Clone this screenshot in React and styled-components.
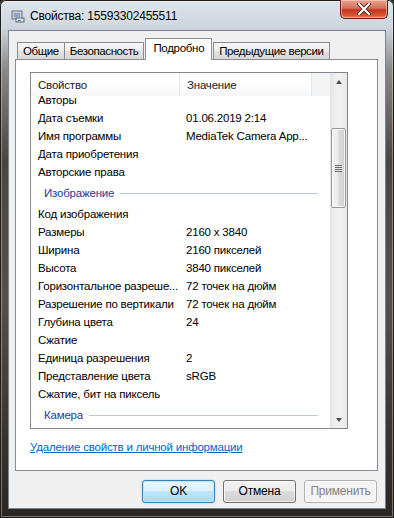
import React from 'react'
import styled, { createGlobalStyle, css } from 'styled-components'

const rows = [
    { name: 'Авторы', value: '' },
    { name: 'Дата съемки', value: '01.06.2019 2:14' },
    { name: 'Имя программы', value: 'MediaTek Camera App...' },
    { name: 'Дата приобретения', value: '' },
    { name: 'Авторские права', value: '' },
    { group: 'Изображение' },
    { name: 'Код изображения', value: '' },
    { name: 'Размеры', value: '2160 x 3840' },
    { name: 'Ширина', value: '2160 пикселей' },
    { name: 'Высота', value: '3840 пикселей' },
    { name: 'Горизонтальное разреше...', value: '72 точек на дюйм' },
    { name: 'Разрешение по вертикали', value: '72 точек на дюйм' },
    { name: 'Глубина цвета', value: '24' },
    { name: 'Сжатие', value: '' },
    { name: 'Единица разрешения', value: '2' },
    { name: 'Представление цвета', value: 'sRGB' },
    { name: 'Сжатие, бит на пиксель', value: '' },
    { group: 'Камера' },
]

const tabs = ['Общие', 'Безопасность', 'Подробно', 'Предыдущие версии']

const Properties = () => {
    return (
        <Frame>
            <GlobalStyle />
            <TitleBar>
                <TitleIcon viewBox="0 0 14 14">
                    <rect x="1" y="2" width="10" height="8" fill="#c9ced6" stroke="#6b7480" />
                    <rect x="3" y="4" width="6" height="4" fill="#8da4c2" />
                    <rect x="5" y="9" width="8" height="4" fill="#dfe3e8" stroke="#5e6670" />
                    <rect x="7" y="11" width="3" height="1" fill="#3b7dd8" />
                </TitleIcon>
                <Title>Свойства: 15593302455511</Title>
                <CloseButton>
                    <svg width="14" height="12" viewBox="0 0 14 12">
                        <path d="M2 1 L12 11 M12 1 L2 11" stroke="#3a1010" strokeWidth="3.6" strokeLinecap="square" />
                        <path d="M2 1 L12 11 M12 1 L2 11" stroke="#fff" strokeWidth="2.2" strokeLinecap="square" />
                    </svg>
                </CloseButton>
            </TitleBar>
            <Client>
                <TabStrip>
                    {tabs.map((t) => (
                        <Tab key={t} $active={t === 'Подробно'}>{t}</Tab>
                    ))}
                </TabStrip>
                <Panel>
                    <ListView>
                        <ListMain>
                            <Header>
                                <HeadCell $w={149}>Свойство</HeadCell>
                                <HeadCell $w={132}>Значение</HeadCell>
                                <HeadCell $w={18} $rest />
                            </Header>
                            <Body>
                                <Rows>
                                    {rows.map((r, i) =>
                                        r.group ? (
                                            <GroupRow key={i}>
                                                <GroupLabel>{r.group}</GroupLabel>
                                                <GroupLine />
                                            </GroupRow>
                                        ) : (
                                            <Row key={i}>
                                                <NameCell>{r.name}</NameCell>
                                                <ValueCell>{r.value}</ValueCell>
                                            </Row>
                                        )
                                    )}
                                </Rows>
                            </Body>
                        </ListMain>
                        <ScrollBar>
                            <Arrow><ArrowUp /></Arrow>
                            <Track>
                                <Thumb>
                                    <Grip />
                                </Thumb>
                            </Track>
                            <Arrow><ArrowDown /></Arrow>
                        </ScrollBar>
                    </ListView>
                    <Link href="#">Удаление свойств и личной информации</Link>
                </Panel>
                <Buttons>
                    <Button $primary>OK</Button>
                    <Button>Отмена</Button>
                    <Button $disabled>Применить</Button>
                </Buttons>
            </Client>
        </Frame>
    )
}

const GlobalStyle = createGlobalStyle`
    body {
        margin: 0;
        background: #2b2622;
        font-family: "Liberation Sans", Arial, sans-serif;
        font-size: 11.5px;
        letter-spacing: -0.2px;
    }
`

const Frame = styled.div`
    width: 394px;
    height: 518px;
    box-sizing: border-box;
    display: flex;
    flex-direction: column;
    border-radius: 6px 6px 0 0;
    background:
        linear-gradient(to bottom, #dfe5ec 0, #ccd4dd 28px, #8a8784 70px, #4b4540 160px, #5a4f47 300px, #3a322c 440px, #2c2622 100%);
    box-shadow: inset 0 0 0 1px #1f1b18, inset 0 0 0 2px rgba(255, 255, 255, 0.35);
`

const TitleBar = styled.div`
    height: 30px;
    display: flex;
    align-items: center;
    padding-left: 11px;
    position: relative;
`

const TitleIcon = styled.svg`
    width: 14px;
    height: 14px;
    margin-top: 2px;
`

const Title = styled.div`
    margin-left: 5px;
    margin-top: 2px;
    font-size: 12px;
    color: #000;
    text-shadow: 0 0 8px rgba(255, 255, 255, 0.9);
`

const CloseButton = styled.div`
    position: absolute;
    top: 0;
    left: 340px;
    width: 48px;
    height: 19px;
    box-sizing: border-box;
    border: 1px solid #5e1d14;
    border-top: none;
    border-radius: 0 0 5px 5px;
    background: linear-gradient(to bottom, #e8a493 0, #d4705a 45%, #c2361c 55%, #d6562f 85%, #e9875c 100%);
    box-shadow: inset 0 0 0 1px rgba(255, 220, 210, 0.5);
    display: flex;
    align-items: center;
    justify-content: center;
`

const Client = styled.div`
    margin: 0 8px;
    height: 479px;
    box-sizing: border-box;
    background: #f0f0f0;
    border: 1px solid #7a8591;
    padding: 0 7px 0 6px;
    display: flex;
    flex-direction: column;
`

const TabStrip = styled.div`
    height: 28px;
    display: flex;
    align-items: flex-end;
    padding-left: 2px;
    position: relative;
    z-index: 1;
`

const Tab = styled.div`
    box-sizing: border-box;
    height: 17px;
    padding: 0 5px;
    margin-right: -1px;
    line-height: 16px;
    letter-spacing: -0.4px;
    color: #000;
    border: 1px solid #898c95;
    border-bottom: none;
    background: linear-gradient(to bottom, #f6f6f6 0, #eeeeee 50%, #e3e3e3 51%, #d8d8d8 100%);
    ${(p) => p.$active && css`
        height: 22px;
        margin: 0 1px -1px 2px;
        padding: 0 7px;
        line-height: 19px;
        letter-spacing: -0.3px;
        background: #fff;
    `}
`

const Panel = styled.div`
    height: 412px;
    box-sizing: border-box;
    background: #fff;
    border: 1px solid #898c95;
    padding: 12px 0 0 14px;
    display: flex;
    flex-direction: column;
`

const ListView = styled.div`
    width: 318px;
    height: 357px;
    box-sizing: border-box;
    border: 1px solid #828790;
    display: flex;
`

const ListMain = styled.div`
    flex: 1;
    display: flex;
    flex-direction: column;
    overflow: hidden;
`

const Header = styled.div`
    height: 23px;
    display: flex;
    flex-shrink: 0;
    position: relative;
    z-index: 1;
    background: #fff;
`

const HeadCell = styled.div`
    width: ${(p) => p.$w}px;
    box-sizing: border-box;
    padding-left: 7px;
    line-height: 24px;
    color: #1b1b1b;
    border-right: 1px solid #e3e6ea;
    background: linear-gradient(to bottom, #ffffff 0, #fcfcfc 60%, #f5f6f7 100%);
    ${(p) => p.$rest && css`
        flex: 1;
        border-right: none;
        background: #f3f4f5;
    `}
`

const Body = styled.div`
    flex: 1;
    overflow: hidden;
`

const Rows = styled.div`
    margin-top: -5px;
`

const Row = styled.div`
    height: 18px;
    display: flex;
    align-items: center;
    color: #000;
    white-space: nowrap;
`

const NameCell = styled.div`
    width: 149px;
    padding-left: 7px;
    box-sizing: border-box;
    overflow: hidden;
`

const ValueCell = styled.div`
    padding-left: 6px;
`

const GroupRow = styled.div`
    height: 24px;
    display: flex;
    align-items: center;
    padding: 0 12px 0 13px;
`

const GroupLabel = styled.div`
    color: #1b3d98;
    white-space: nowrap;
`

const GroupLine = styled.div`
    flex: 1;
    height: 1px;
    margin-left: 6px;
    margin-top: 1px;
    background: #b9c6de;
`

const ScrollBar = styled.div`
    width: 17px;
    display: flex;
    flex-direction: column;
    background: linear-gradient(to right, #e3e3e3 0, #f0f0f0 30%, #f0f0f0 70%, #e8e8e8 100%);
`

const Arrow = styled.div`
    height: 17px;
    display: flex;
    align-items: center;
    justify-content: center;
`

const ArrowUp = styled.div`
    width: 0;
    height: 0;
    border-left: 3.5px solid transparent;
    border-right: 3.5px solid transparent;
    border-bottom: 4px solid #4d4d4d;
`

const ArrowDown = styled.div`
    width: 0;
    height: 0;
    border-left: 3.5px solid transparent;
    border-right: 3.5px solid transparent;
    border-top: 4px solid #4d4d4d;
`

const Track = styled.div`
    flex: 1;
    padding-top: 38px;
`

const Thumb = styled.div`
    height: 80px;
    margin: 0 1px;
    box-sizing: border-box;
    border: 1px solid #979797;
    border-radius: 2px;
    background: linear-gradient(to right, #f4f4f4 0, #eaeaea 45%, #dadada 55%, #cfcfcf 100%);
    box-shadow: inset 0 0 0 1px rgba(255, 255, 255, 0.8);
    display: flex;
    align-items: center;
    justify-content: center;
`

const Grip = styled.div`
    width: 7px;
    height: 7px;
    background: repeating-linear-gradient(to bottom, #6b6b6b 0, #6b6b6b 1px, #e8e8e8 1px, #e8e8e8 2px);
`

const Link = styled.a`
    margin-top: 12px;
    color: #0066cc;
    text-decoration: underline;
    align-self: flex-start;
`

const Buttons = styled.div`
    display: flex;
    justify-content: flex-end;
    gap: 8px;
    padding: 9px 1px 0 0;
`

const Button = styled.div`
    width: 73px;
    height: 23px;
    box-sizing: border-box;
    border: 1px solid #707070;
    border-radius: 3px;
    font-size: 12px;
    line-height: 21px;
    text-align: center;
    color: #000;
    background: linear-gradient(to bottom, #f2f2f2 0, #ebebeb 49%, #dddddd 50%, #cfcfcf 100%);
    box-shadow: inset 0 0 0 1px rgba(255, 255, 255, 0.7);
    ${(p) => p.$primary && css`
        border-color: #3c7fb1;
        background: linear-gradient(to bottom, #eaf6fd 0, #d9f0fc 49%, #bee6fd 50%, #a7d9f5 100%);
        box-shadow: inset 0 0 0 1px #bfe7fd, 0 0 2px #8fd1f5;
    `}
    ${(p) => p.$disabled && css`
        border-color: #adb2b5;
        color: #838383;
        background: #f4f4f4;
    `}
`

export default Properties
